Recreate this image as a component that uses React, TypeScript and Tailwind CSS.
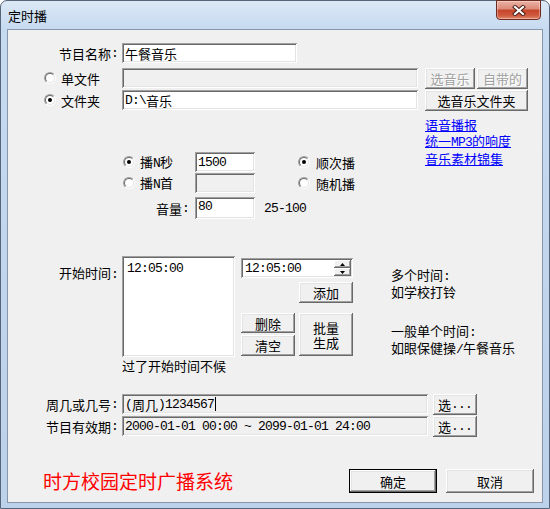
import React from "react";

const MONO = "font-['Liberation_Mono',monospace] text-[13px] tracking-[-0.8px]";

function M({ children }: { children: React.ReactNode }) {
  return <span className={MONO}>{children}</span>;
}

function Radio({ checked }: { checked?: boolean }) {
  return (
    <span className="inline-flex w-[12px] h-[12px] shrink-0 rounded-full border border-t-[#a0a0a0] border-l-[#a0a0a0] border-b-white border-r-white">
      <span className="flex w-full h-full items-center justify-center rounded-full border border-t-[#696969] border-l-[#696969] border-b-[#e3e3e3] border-r-[#e3e3e3] bg-white">
        {checked ? <span className="block w-[4px] h-[4px] rounded-full bg-black" /> : null}
      </span>
    </span>
  );
}

function Input({
  children,
  className = "",
  gray,
}: {
  children?: React.ReactNode;
  className?: string;
  gray?: boolean;
}) {
  return (
    <div
      className={`flex items-center pl-[3px] h-[20px] shrink-0 whitespace-nowrap overflow-hidden shadow-[inset_1px_1px_#a0a0a0,inset_-1px_-1px_#ffffff,inset_2px_2px_#696969,inset_-2px_-2px_#e3e3e3] ${
        gray ? "bg-[#f0f0f0]" : "bg-white"
      } ${className}`}
    >
      {children}
    </div>
  );
}

function Btn({
  children,
  className = "",
  disabled,
  def,
}: {
  children?: React.ReactNode;
  className?: string;
  disabled?: boolean;
  def?: boolean;
}) {
  return (
    <div
      className={`flex items-center justify-center shrink-0 bg-[#f0f0f0] whitespace-nowrap shadow-[inset_-1px_-1px_#696969,inset_1px_1px_#ffffff,inset_-2px_-2px_#a0a0a0,inset_2px_2px_#e3e3e3] ${
        disabled ? "text-[#a0a0a0] [text-shadow:1px_1px_#ffffff]" : "text-black"
      } ${def ? "border border-black" : ""} ${className}`}
    >
      {children}
    </div>
  );
}

function SpinHalf({ up }: { up?: boolean }) {
  return (
    <div className="flex items-center justify-center h-[8px] w-full bg-[#f0f0f0] shadow-[inset_-1px_-1px_#696969,inset_1px_1px_#ffffff,inset_-2px_-2px_#a0a0a0]">
      <svg width="5" height="3" viewBox="0 0 5 3">
        {up ? <path d="M2.5 0 L5 3 L0 3 Z" fill="#000" /> : <path d="M0 0 L5 0 L2.5 3 Z" fill="#000" />}
      </svg>
    </div>
  );
}

export default function App() {
  return (
    <div className="w-[550px] h-[509px] bg-white font-['Noto_Sans_CJK_SC',sans-serif] text-[13px] leading-[15px] text-black">
      <div className="relative w-[550px] h-[509px] rounded-t-[7px] border border-[#56657a] bg-[linear-gradient(180deg,#dce8f6_0px,#c6daf0_28px,#bcd1ea_100%)] flex flex-col">
        {/* title bar */}
        <div className="h-[28px] flex items-center pl-[7px] text-[13px] text-black">定时播</div>
        {/* close button */}
        <div className="absolute top-[-1px] right-[8px] w-[45px] h-[20px] rounded-b-[4px] border border-[#6e2a20] bg-[linear-gradient(180deg,#eab2a4_0%,#dd8a78_45%,#c5432a_50%,#cf5a3e_80%,#e0876a_100%)] flex items-center justify-center shadow-[inset_0_0_0_1px_rgba(255,255,255,0.35)]">
          <svg width="14" height="11" viewBox="0 0 14 11">
            <path d="M3 2 L11 9 M11 2 L3 9" stroke="#3e1912" strokeWidth="4" strokeLinecap="square" />
            <path d="M3 2 L11 9 M11 2 L3 9" stroke="#ffffff" strokeWidth="2.2" strokeLinecap="square" />
          </svg>
        </div>

        {/* client area */}
        <div className="mx-[6px] h-[474px] border border-[#8796ab] bg-[#f0f0f0] flex flex-col">
          {/* 节目名称 */}
          <div className="mt-[13px] flex h-[20px]">
            <div className="w-[110px] flex items-center justify-end">
              节目名称<M>:</M>
            </div>
            <Input className="ml-[4px] w-[175px]">午餐音乐</Input>
          </div>

          {/* 单文件 */}
          <div className="mt-[5px] flex items-start h-[21px]">
            <div className="w-[114px] h-[20px] flex items-center pl-[36px]">
              <Radio />
              <span className="ml-[5px]">单文件</span>
            </div>
            <Input gray className="w-[296px]" />
            <div className="ml-[7px] flex gap-[2px]">
              <Btn disabled className="w-[50px] h-[21px]">
                选音乐
              </Btn>
              <Btn disabled className="w-[51px] h-[21px]">
                自带的
              </Btn>
            </div>
          </div>

          {/* 文件夹 */}
          <div className="mt-[1px] flex items-start h-[21px]">
            <div className="w-[114px] h-[20px] flex items-center pl-[36px]">
              <Radio checked />
              <span className="ml-[5px]">文件夹</span>
            </div>
            <Input className="w-[296px]">
              <M>D:\</M>音乐
            </Input>
            <Btn className="ml-[7px] w-[103px] h-[21px]">选音乐文件夹</Btn>
          </div>

          {/* middle block */}
          <div className="mt-[5px] flex items-start">
            <div className="w-[417px] flex flex-col pt-[36px]">
              <div className="flex h-[20px]">
                <div className="w-[187px] flex items-center pl-[115px]">
                  <Radio checked />
                  <span className="ml-[5px]">
                    播<M>N</M>秒
                  </span>
                </div>
                <Input className="w-[60px]">
                  <M>1500</M>
                </Input>
                <div className="ml-[43px] flex items-center">
                  <Radio checked />
                  <span className="ml-[6px]">顺次播</span>
                </div>
              </div>
              <div className="mt-[1px] flex h-[20px]">
                <div className="w-[187px] flex items-center pl-[115px]">
                  <Radio />
                  <span className="ml-[5px]">
                    播<M>N</M>首
                  </span>
                </div>
                <Input gray className="w-[60px]" />
                <div className="ml-[43px] flex items-center">
                  <Radio />
                  <span className="ml-[6px]">随机播</span>
                </div>
              </div>
              <div className="mt-[4px] flex h-[22px] items-center">
                <div className="w-[181px] flex items-center justify-end">
                  音量<M>:</M>
                </div>
                <Input className="ml-[6px] w-[60px] h-[22px] items-start pt-[2px]">
                  <M>80</M>
                </Input>
                <span className={`ml-[9px] ${MONO}`}>25-100</span>
              </div>
            </div>
            <div className="flex flex-col leading-[16px] pt-[1px] text-[#0000ff]">
              <span className="underline">语音播报</span>
              <span className="underline">
                统一<M>MP3</M>的响度
              </span>
              <span className="underline">音乐素材锦集</span>
            </div>
          </div>

          {/* 开始时间 */}
          <div className="mt-[37px] flex items-start">
            <div className="w-[110px] mt-[9px] text-right">
              开始时间<M>:</M>
            </div>
            <div className="ml-[4px] flex flex-col">
              <div className="w-[113px] h-[101px] bg-white pl-[5px] pt-[3px] shadow-[inset_1px_1px_#a0a0a0,inset_-1px_-1px_#ffffff,inset_2px_2px_#696969,inset_-2px_-2px_#e3e3e3]">
                <M>12:05:00</M>
              </div>
              <div className="mt-[1px] whitespace-nowrap">过了开始时间不候</div>
            </div>
            <div className="ml-[6px] w-[112px] flex flex-col">
              <div className="mt-[2px] w-[112px] h-[20px] flex bg-white shadow-[inset_1px_1px_#a0a0a0,inset_-1px_-1px_#ffffff,inset_2px_2px_#696969,inset_-2px_-2px_#e3e3e3]">
                <div className="flex-1 flex items-center pl-[4px]">
                  <M>12:05:00</M>
                </div>
                <div className="mt-[2px] mr-[2px] w-[17px] h-[16px] flex flex-col">
                  <SpinHalf up />
                  <SpinHalf />
                </div>
              </div>
              <Btn className="self-end mt-[4px] w-[54px] h-[21px]">添加</Btn>
              <div className="mt-[10px] flex gap-[4px]">
                <div className="flex flex-col gap-[2px]">
                  <Btn className="w-[54px] h-[20px]">删除</Btn>
                  <Btn className="w-[54px] h-[21px]">清空</Btn>
                </div>
                <Btn className="w-[54px] h-[43px] flex-col leading-[15px]">
                  <span>批量</span>
                  <span>生成</span>
                </Btn>
              </div>
            </div>
            <div className="ml-[38px] mt-[11px] flex flex-col leading-[15px] whitespace-nowrap">
              <span>
                多个时间<M>:</M>
              </span>
              <span>如学校打铃</span>
              <span className="mt-[24px]">
                一般单个时间<M>:</M>
              </span>
              <span>
                如眼保健操<M>/</M>午餐音乐
              </span>
            </div>
          </div>

          {/* 周几 */}
          <div className="mt-[21px] flex items-start h-[21px]">
            <div className="w-[110px] h-[20px] flex items-center justify-end">
              周几或几号<M>:</M>
            </div>
            <Input gray className="ml-[4px] w-[306px]">
              <M>(</M>周几<M>)1234567</M>
              <span className="ml-[1px] w-[1px] h-[14px] bg-black" />
            </Input>
            <Btn className="ml-[5px] w-[44px] h-[21px]">
              选<M>...</M>
            </Btn>
          </div>
          <div className="mt-[1px] flex items-start h-[21px]">
            <div className="w-[110px] h-[20px] flex items-center justify-end">
              节目有效期<M>:</M>
            </div>
            <Input gray className="ml-[4px] w-[306px]">
              <M>2000-01-01 00:00 ~ 2099-01-01 24:00</M>
            </Input>
            <Btn className="ml-[5px] w-[44px] h-[21px]">
              选<M>...</M>
            </Btn>
          </div>

          {/* bottom */}
          <div className="mt-[32px] flex items-center h-[24px]">
            <div className="w-[341px] pl-[35px] text-[19px] leading-[24px] text-[#ff0000] whitespace-nowrap">
              时方校园定时广播系统
            </div>
            <Btn def className="w-[88px] h-[24px]">
              确定
            </Btn>
            <Btn className="ml-[9px] w-[88px] h-[24px]">取消</Btn>
          </div>
        </div>
      </div>
    </div>
  );
}
